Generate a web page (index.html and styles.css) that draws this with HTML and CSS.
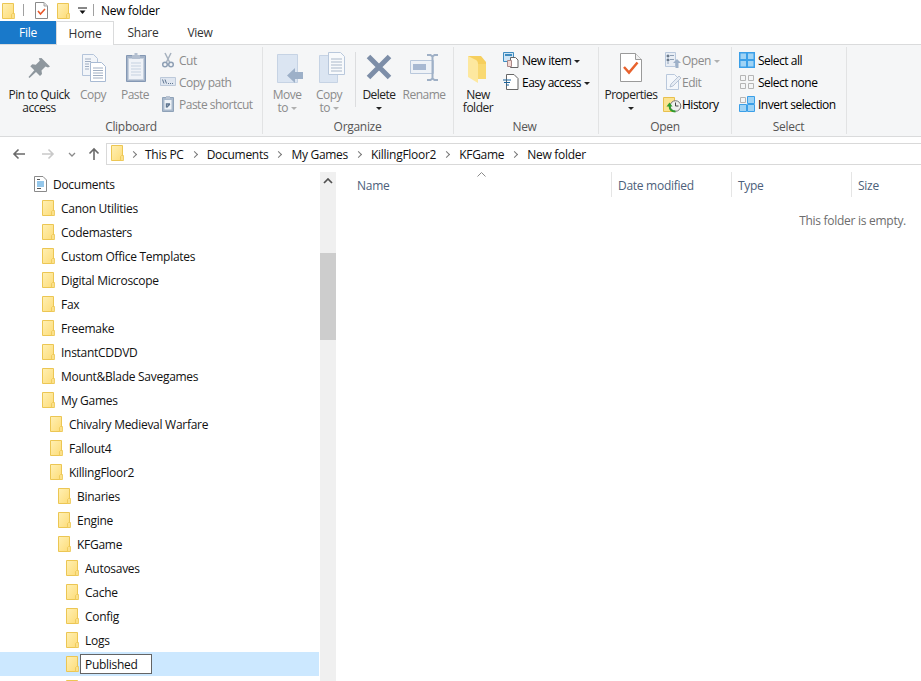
FILE: index.html
```html
<!DOCTYPE html>
<html lang="en">
<head>
<meta charset="utf-8">
<title>New folder</title>
<link rel="stylesheet" href="styles.css">
</head>
<body>
<svg class="defs" width="0" height="0">
  <defs>
    <linearGradient id="fg" x1="0" y1="0" x2="1" y2="1"><stop offset="0" stop-color="#fff0b4"/><stop offset="1" stop-color="#fddc78"/></linearGradient>
    <symbol id="folder" viewBox="0 0 13 16">
      <path d="M.5.5h11v15H.5z" fill="url(#fg)" stroke="#ecc653"/>
      <path d="M10.500 10.500h2v5h-3v-4z" fill="#fbe08a" stroke="#ecc653" stroke-width=".8"/>
    </symbol>
    <symbol id="props" viewBox="0 0 13 17">
      <path d="M.5.5h8.500l3.500 3.500v12.500H.5z" fill="#fff" stroke="#8a8a8a"/>
      <path d="M9 .5v3.500h3.500" fill="#ddd" stroke="#a5a5a5"/>
      <path d="M3 9l2.500 3 4.500-5" fill="none" stroke="#e8572a" stroke-width="1.600"/>
    </symbol>
  </defs>
</svg>

<header class="titlebar">
  <svg class="ico-folder"><use href="#folder"/></svg>
  <span class="tsep"></span>
  <svg class="ico-prop"><use href="#props"/></svg>
  <svg class="ico-folder ico-folder-2"><use href="#folder"/></svg>
  <svg class="ico-qat" viewBox="0 0 9 8"><path d="M0 1h9" stroke="#111"/><path d="M1.500 3.500h6l-3 3.500z" fill="#111"/></svg>
  <span class="tsep tsep-2"></span>
  <span class="title">New folder</span>
</header>

<nav class="tabs">
  <span class="tab tab-file">File</span>
  <span class="tab tab-home">Home</span>
  <span class="tab tab-share">Share</span>
  <span class="tab tab-view">View</span>
</nav>

<section class="ribbon">
  <div class="group g-clip">
    <div class="gbody">
      <div class="big w-pin">
        <svg class="bigico" viewBox="0 0 32 32"><path d="M18.500 7l8.500 8.500-2 1-2.500-1-4 4 .5 3.500-2 2-4-4-6.500 6-1-1 5.800-6.800-4-4 2-2 3.500.5 4-4-1-2.500z" fill="#8e979e"/></svg>
        <span class="lab">Pin to Quick<br>access</span>
      </div>
      <div class="big w-copy dis">
        <svg class="bigico" viewBox="0 0 32 32"><path d="M5.500 3.500h11l4 4v17h-15z" fill="#f2f5f9" stroke="#b4c4da"/><path d="M13.500 11.500h11l4 4v15h-15z" fill="#fff" stroke="#a8bad3"/><path d="M16 17h10M16 19.500h10M16 22h10M16 24.500h10M16 27h10M8 8h6M8 10.500h6M8 13h4M8 15.500h4M8 18h4" stroke="#a0aec2"/></svg>
        <span class="lab">Copy</span>
      </div>
      <div class="big w-paste dis">
        <svg class="bigico" viewBox="0 0 32 32"><path d="M7.500 4.500h19v26h-19z" fill="#a4b3c8" stroke="#8498b4"/><path d="M9.500 7.500h15v21h-15z" fill="#f0f3f8" stroke="#c7d1de"/><path d="M13 4h8v4h-8zM15.500 2h3v3h-3z" fill="#b3bfd0"/><path d="M12 12h10M12 15h10M12 18h10M12 21h10M12 24h10" stroke="#c5d1e0"/></svg>
        <span class="lab">Paste</span>
      </div>
      <div class="smalls">
        <div class="small dis"><svg class="smico" viewBox="0 0 16 16"><path d="M5 1l4.500 9M11 1L6.500 10" stroke="#a7b2bf" stroke-width="1.500" fill="none"/><circle cx="5" cy="12.500" r="2.300" fill="none" stroke="#8fa0b5" stroke-width="1.500"/><circle cx="11" cy="12.500" r="2.300" fill="none" stroke="#8fa0b5" stroke-width="1.500"/></svg>Cut</div>
        <div class="small dis"><svg class="smico" viewBox="0 0 16 16"><path d="M.5 3.500h15v8H.5z" fill="#dfe6f0" stroke="#bcc9da"/><path d="M2.500 5.500l1.500 4M5 5.500l1.500 4M8 9.500h1M10 9.500h1M12 9.500h1" stroke="#5e7590"/></svg>Copy path</div>
        <div class="small dis"><svg class="smico" viewBox="0 0 16 16"><path d="M2.500 1.500h11v14h-11z" fill="#a9b9cc" stroke="#8fa2b8"/><path d="M4.500 4h7v9.500h-7z" fill="#eef2f7"/><path d="M6 0h4v3H6z" fill="#b8c3d2"/><path d="M6.500 11.500V8h3.500M10 8l-3.500 3.500" stroke="#5e7590" stroke-width="1.400" fill="none"/></svg>Paste shortcut</div>
      </div>
    </div>
    <div class="glabel">Clipboard</div>
  </div>

  <div class="group g-org">
    <div class="gbody">
      <div class="big w-move dis">
        <svg class="bigico" viewBox="0 0 32 32"><path d="M6.500 3.500h20v28h-20z" fill="#dbe5f2" stroke="#c6d3e4"/><path d="M32 21H24v-4l-8 7.500 8 7.500v-4h8z" fill="#9db0c8"/></svg>
        <span class="lab">Move<br>to <i class="caret c-gray"></i></span>
      </div>
      <div class="big w-copyto dis">
        <svg class="bigico" viewBox="0 0 32 32"><path d="M6.500 4.500h18v27h-18z" fill="#dbe5f2" stroke="#c6d3e4"/><path d="M15.500 1.500h12l4 4v18h-16z" fill="#f8fafc" stroke="#b9c8dc"/><path d="M18 8h11M18 11h11M18 14h11M18 17h11M18 20h11" stroke="#aab8ca"/></svg>
        <span class="lab">Copy<br>to <i class="caret c-gray"></i></span>
      </div>
      <span class="vsep"></span>
      <div class="big w-del">
        <svg class="bigico" viewBox="0 0 32 32"><path d="M5.500 5.500l21 21M26.500 5.500l-21 21" stroke="#7d8ea8" stroke-width="5"/></svg>
        <span class="lab">Delete<br><i class="caret"></i></span>
      </div>
      <div class="big w-ren dis">
        <svg class="bigico" viewBox="0 0 32 32"><path d="M2.500 9.500h23v13h-23z" fill="#eef2f7" stroke="#b9c8dc"/><path d="M5 13h13v6H5z" fill="#a8b9d2"/><path d="M19 4h3.500L24.500 5.500 26.500 4H30M24.500 5v22M19 29h3.500l2-1.500 2 1.500H30" stroke="#9fb0c6" stroke-width="2" fill="none"/></svg>
        <span class="lab">Rename</span>
      </div>
    </div>
    <div class="glabel">Organize</div>
  </div>

  <div class="group g-new">
    <div class="gbody">
      <div class="big w-newf">
        <svg class="bigico" viewBox="0 0 32 32"><path d="M6 5h13l5 6v17H10z" fill="#f6cf5e"/><path d="M6 5l8 4c1.500 1 2 2 2 4v19l-10-6z" fill="#fde89f"/><path d="M16 13h8v15h-8z" fill="#f9d972"/></svg>
        <span class="lab">New<br>folder</span>
      </div>
      <div class="smalls s-new">
        <div class="small"><svg class="smico" viewBox="0 0 16 16"><path d="M.5.5h10v9H.5z" fill="#cfe5f5" stroke="#3f8cc0"/><path d="M2 2h7v2H2z" fill="#3f8cc0"/><path d="M7.500 5.500h5l2.500 2.500v7.500H7.500z" fill="#fff" stroke="#666"/><path d="M4.500 8.500h4v6h-4z" fill="#f3d9d3" stroke="#a88"/></svg>New item <i class="caret c-inl"></i></div>
        <div class="small"><svg class="smico" viewBox="0 0 16 16"><path d="M3.500.500h7.500l4 4v11H3.500z" fill="#fff" stroke="#666"/><path d="M0 6h8M1 8.500h6M3 11h3" stroke="#17639e" stroke-width="1.200"/></svg>Easy access <i class="caret c-inl"></i></div>
      </div>
    </div>
    <div class="glabel">New</div>
  </div>

  <div class="group g-open">
    <div class="gbody">
      <div class="big w-prop">
        <svg class="bigico" viewBox="0 0 32 32"><path d="M5.500 2.500h15l6 6v22h-21z" fill="#fff" stroke="#9a9a9a"/><path d="M20.500 2.500v6h6" fill="#f0f0f0" stroke="#9a9a9a"/><path d="M9 16l5 5.500 8.500-10" fill="none" stroke="#e8622d" stroke-width="2.500"/></svg>
        <span class="lab">Properties<br><i class="caret"></i></span>
      </div>
      <div class="smalls s-open">
        <div class="small dis"><svg class="smico" viewBox="0 0 16 16"><path d="M.5.500h10v14H.5z" fill="#e8edf4" stroke="#b9c8dc"/><path d="M2 3h2v2H2zM2 7h2v2H2zM5 3.500h4M5 7.500h4M2 11h2" stroke="#8ea0b6"/><path d="M12 7l4 4h-2.500v5h-3v-5H8z" fill="#9db0c8"/></svg>Open <i class="caret c-inl c-gray"></i></div>
        <div class="small dis"><svg class="smico" viewBox="0 0 16 16"><path d="M1.500.500h8l4 4v11h-12z" fill="#f4f7fb" stroke="#b9c8dc"/><path d="M5 13l1-3 8-8 2 2-8 8z" fill="#e6ecf4" stroke="#a9b9cd" stroke-width=".8"/></svg>Edit</div>
        <div class="small"><svg class="smico" viewBox="0 0 16 16"><path d="M-1.500 1.500h11v14h-11z" fill="#fbe391" stroke="#e8c04e"/><circle cx="10.500" cy="10" r="5.300" fill="#eee" stroke="#777"/><path d="M10.500 6.500V10h3" stroke="#444" fill="none"/><path d="M1.500 10.500l3-4 3 4z" fill="#2f9c2c"/><path d="M4.500 9.500c0 3.500 2 6 6 6" stroke="#2f9c2c" stroke-width="1.800" fill="none"/></svg>History</div>
      </div>
    </div>
    <div class="glabel">Open</div>
  </div>

  <div class="group g-sel">
    <div class="gbody">
      <div class="smalls s-sel">
        <div class="small"><svg class="smico" viewBox="0 0 16 16"><path d="M0 0h16v16H0z" fill="#3a9fe8"/><path d="M1.500 1.500H7V7H1.500zM9 1.500h5.500V7H9zM1.500 9H7v5.500H1.500zM9 9h5.500v5.500H9z" fill="#9fd3f5"/></svg>Select all</div>
        <div class="small"><svg class="smico" viewBox="0 0 16 16"><path d="M1.500 1.500h5v5h-5zM9.500 1.500h5v5h-5zM1.500 9.500h5v5h-5zM9.500 9.500h5v5h-5z" fill="none" stroke="#b5b5b5"/></svg>Select none</div>
        <div class="small"><svg class="smico" viewBox="0 0 16 16"><path d="M1.500 1.500h5v5h-5z" fill="none" stroke="#b5b5b5"/><path d="M8.500.5h7v7h-7zM.5 8.500h7v7h-7z" fill="#9fd3f5" stroke="#3a9fe8"/><path d="M8.500 8.500h7v7h-7z" fill="#9fd3f5" stroke="#3a9fe8"/></svg>Invert selection</div>
      </div>
    </div>
    <div class="glabel">Select</div>
  </div>
</section>

<div class="addr-row">
  <svg class="nav nav-back" viewBox="0 0 14 12"><path d="M13 6H2M6.500 1.500L2 6l4.500 4.500" fill="none" stroke="#6a6a6a" stroke-width="1.600"/></svg>
  <svg class="nav nav-fwd" viewBox="0 0 14 12"><path d="M1 6h11M7.500 1.500L12 6l-4.500 4.500" fill="none" stroke="#c9c9c9" stroke-width="1.600"/></svg>
  <svg class="nav-down" viewBox="0 0 8 5"><path d="M1 1l3 3 3-3" fill="none" stroke="#8a8a8a" stroke-width="1.300"/></svg>
  <svg class="nav nav-up" viewBox="0 0 12 14"><path d="M6 13V2M1.500 6.500L6 2l4.500 4.500" fill="none" stroke="#6a6a6a" stroke-width="1.600"/></svg>
  <div class="addr">
    <svg class="ico-folder"><use href="#folder"/></svg>
    <span class="crumb crumb-first">This PC</span>
    <span class="crumb">Documents</span>
    <span class="crumb">My Games</span>
    <span class="crumb">KillingFloor2</span>
    <span class="crumb">KFGame</span>
    <span class="crumb">New folder</span>
  </div>
</div>

<main class="main">
  <aside class="tree">
    <div class="rows">
      <div class="row lv0"><svg class="ico-folder" viewBox="0 0 13 16"><path d="M.5.500h8.500l3.500 3.500v11.500H.5z" fill="#fff" stroke="#8a8a8a"/><path d="M3 3.500h3M3 12.500h4" stroke="#555"/><path d="M3 6h7M3 8h7M3 10h7" stroke="#2a8fd6"/></svg>Documents</div>
      <div class="row lv1"><svg class="ico-folder"><use href="#folder"/></svg>Canon Utilities</div>
      <div class="row lv1"><svg class="ico-folder"><use href="#folder"/></svg>Codemasters</div>
      <div class="row lv1"><svg class="ico-folder"><use href="#folder"/></svg>Custom Office Templates</div>
      <div class="row lv1"><svg class="ico-folder"><use href="#folder"/></svg>Digital Microscope</div>
      <div class="row lv1"><svg class="ico-folder"><use href="#folder"/></svg>Fax</div>
      <div class="row lv1"><svg class="ico-folder"><use href="#folder"/></svg>Freemake</div>
      <div class="row lv1"><svg class="ico-folder"><use href="#folder"/></svg>InstantCDDVD</div>
      <div class="row lv1"><svg class="ico-folder"><use href="#folder"/></svg>Mount&amp;Blade Savegames</div>
      <div class="row lv1"><svg class="ico-folder"><use href="#folder"/></svg>My Games</div>
      <div class="row lv2"><svg class="ico-folder"><use href="#folder"/></svg>Chivalry Medieval Warfare</div>
      <div class="row lv2"><svg class="ico-folder"><use href="#folder"/></svg>Fallout4</div>
      <div class="row lv2"><svg class="ico-folder"><use href="#folder"/></svg>KillingFloor2</div>
      <div class="row lv3"><svg class="ico-folder"><use href="#folder"/></svg>Binaries</div>
      <div class="row lv3"><svg class="ico-folder"><use href="#folder"/></svg>Engine</div>
      <div class="row lv3"><svg class="ico-folder"><use href="#folder"/></svg>KFGame</div>
      <div class="row lv4"><svg class="ico-folder"><use href="#folder"/></svg>Autosaves</div>
      <div class="row lv4"><svg class="ico-folder"><use href="#folder"/></svg>Cache</div>
      <div class="row lv4"><svg class="ico-folder"><use href="#folder"/></svg>Config</div>
      <div class="row lv4"><svg class="ico-folder"><use href="#folder"/></svg>Logs</div>
      <div class="row lv4 sel"><svg class="ico-folder"><use href="#folder"/></svg><span class="rename">Published</span></div>
      <div class="row lv4"><svg class="ico-folder"><use href="#folder"/></svg></div>
    </div>
    <div class="scrollbar">
      <svg class="sb-up" viewBox="0 0 10 6"><path d="M1 5l4-4 4 4" fill="none" stroke="#505050" stroke-width="1.700"/></svg>
      <div class="thumb"></div>
    </div>
  </aside>
  <section class="list">
    <div class="cols">
      <span class="sort"><svg class="sort-ico" viewBox="0 0 9 5"><path d="M.5 4.500l4-4 4 4" fill="none" stroke="#8a8a8a"/></svg></span>
      <span class="col c-name">Name</span>
      <span class="col c-date">Date modified</span>
      <span class="col c-type">Type</span>
      <span class="col c-size">Size</span>
    </div>
    <p class="empty">This folder is empty.</p>
  </section>
</main>
</body>
</html>
```

FILE: styles.css
```css
* { box-sizing: border-box; }
html, body { margin: 0; height: 100%; overflow: hidden; background: #fff; }
body {
  font: 12px/16px "Open Sans", "Noto Sans", sans-serif;
  letter-spacing: -0.28px;
  color: #000;
  display: flex;
  flex-direction: column;
  height: 681px;
}
.defs { position: absolute; }

.titlebar { height: 21px; display: flex; align-items: center; flex: none; }
.ico-folder { width: 13px; height: 16px; flex: none; display: block; }
.titlebar > .ico-folder { margin-left: 2px; }
.tsep { width: 1px; height: 12px; background: #a0a0a0; margin: -2px 0 0 8px; }
.ico-prop { width: 13px; height: 17px; margin-left: 11px; flex: none; }
.titlebar > .ico-folder-2 { margin-left: 9px; }
.ico-qat { width: 9px; height: 8px; margin-left: 8px; flex: none; }
.tsep-2 { margin-left: 6px; }
.title { margin-left: 7px; }

.tabs { height: 24px; display: flex; flex: none; border-bottom: 1px solid #dadbdc; position: relative; }
.tab { display: flex; align-items: center; justify-content: center; height: 24px; color: #333; }
.tab-file { width: 56px; height: 23px; background: #1979ca; color: #fff; padding-top: 1px; }
.tab-home { width: 58px; border: 1px solid #dadbdc; border-bottom: 0; position: relative; z-index: 1; background: #fff; }
.tab-share { width: 58px; }
.tab-view { width: 56px; }

.ribbon { height: 92px; flex: none; background: #f5f6f7; border-bottom: 1px solid #dadbdc; display: flex; padding-top: 2px; letter-spacing: -0.5px; }
.group { display: flex; flex-direction: column; flex: none; border-right: 1px solid #e2e3e4; height: 87px; }
.gbody { display: flex; height: 73px; }
.glabel { text-align: center; color: #555; height: 14px; line-height: 14px; letter-spacing: -0.3px; }
.g-clip { width: 263px; }
.g-org { width: 191px; }
.g-new { width: 145px; }
.g-open { width: 133px; }
.g-sel { width: 115px; }
.g-org .glabel { padding-right: 1px; }
.g-new .glabel { padding-right: 3px; }
.g-sel .glabel { padding-right: 1px; }

.big { display: flex; flex-direction: column; align-items: center; flex: none; color: #222; }
.bigico { width: 32px; height: 32px; margin-top: 4px; flex: none; display: block; }
.lab { text-align: center; margin-top: 5px; line-height: 13px; white-space: nowrap; }
.dis { color: #8b8b8b; }
.w-pin { width: 78px; }
.w-copy { width: 30px; }
.w-paste { width: 30px; margin-left: 12px; }
.w-move { width: 30px; margin-left: 9px; }
.w-copyto { width: 30px; margin-left: 12px; }
.vsep { width: 1px; height: 55px; background: #dcdddf; margin: 5px 0 0 11px; flex: none; }
.w-del { width: 36px; margin-left: 5px; }
.w-ren { width: 44px; margin-left: 5px; }
.w-newf { width: 38px; margin-left: 5px; }
.w-prop { width: 56px; margin-left: 4px; }

.smalls { display: flex; flex-direction: column; flex: none; }
.small { height: 22px; display: flex; align-items: center; white-space: nowrap; padding-top: 2px; }
.smico { width: 16px; height: 16px; flex: none; margin: 0 3px 2px 0; overflow: visible; }
.g-clip .smalls { margin: 2px 0 0 10px; }
.s-new { margin: 2px 0 0 6px; }
.s-open { margin: 2px 0 0 6px; }
.s-open .smico { margin-right: 1px; }
.s-sel { margin: 2px 0 0 7px; }

.caret { display: inline-block; width: 0; height: 0; border: 3px solid transparent; border-top: 3px solid #222; border-bottom: 0; vertical-align: 2px; }
.c-gray { border-top-color: #b0b0b0; }
.c-inl { margin-left: 3px; }

.addr-row { height: 35px; flex: none; display: flex; align-items: center; padding-bottom: 1px; }
.nav { flex: none; }
.nav-back { width: 14px; height: 12px; margin-left: 12px; }
.nav-fwd { width: 14px; height: 12px; margin-left: 15px; }
.nav-down { width: 8px; height: 5px; margin-left: 13px; flex: none; }
.nav-up { width: 12px; height: 14px; margin-left: 12px; }
.addr { margin-left: 6px; flex: 1; height: 22px; border: 1px solid #d9d9d9; border-right: 0; display: flex; align-items: center; padding: 2px 0 0 4px; white-space: nowrap; }
.addr .ico-folder { margin-bottom: 4px; }
.crumb { color: #111; }
.crumb::before { content: ""; display: inline-block; width: 4px; height: 4px; border-top: 1px solid #777; border-right: 1px solid #777; transform: rotate(45deg); margin: 0 10px 1px 8px; vertical-align: 1px; }
.crumb-first::before { margin: 0 9px 1px 7px; }

.main { flex: 1; min-height: 0; display: flex; }
.tree { width: 336px; flex: none; display: flex; }
.rows { width: 319px; flex: none; }
.row { height: 24px; display: flex; align-items: center; gap: 6px; color: #111; padding-top: 2px; }
.row .ico-folder { margin-bottom: 2px; }
.lv0 { padding-left: 34px; }
.lv1 { padding-left: 42px; }
.lv2 { padding-left: 50px; }
.lv3 { padding-left: 58px; }
.lv4 { padding-left: 66px; }
.sel { background: #cce8ff; }
.rename { background: #fff; border: 1px solid #646464; height: 20px; width: 72px; display: flex; align-items: center; padding: 2px 0 0 4px; margin: 0 0 2px -5px; }
.scrollbar { width: 16px; margin-left: 1px; background: #f0f0f0; flex: none; padding-top: 6px; }
.sb-up { width: 10px; height: 6px; display: block; margin-left: 3px; }
.thumb { height: 87px; background: #cdcdcd; margin-top: 69px; }

.list { flex: 1; min-width: 0; }
.cols { height: 26px; display: flex; position: relative; color: #4c607a; }
.col { height: 25px; border-right: 1px solid #e5e5e5; display: flex; align-items: center; padding: 3px 0 0 6px; flex: none; }
.c-name { width: 276px; padding-left: 21px; }
.c-date { width: 120px; }
.c-type { width: 120px; }
.c-size { width: 69px; border-right: 0; }
.sort { position: absolute; left: 141px; top: 0; line-height: 0; }
.sort-ico { width: 9px; height: 5px; }
.empty { margin: 15px 15px 0 0; text-align: right; color: #6d6d6d; }
```
